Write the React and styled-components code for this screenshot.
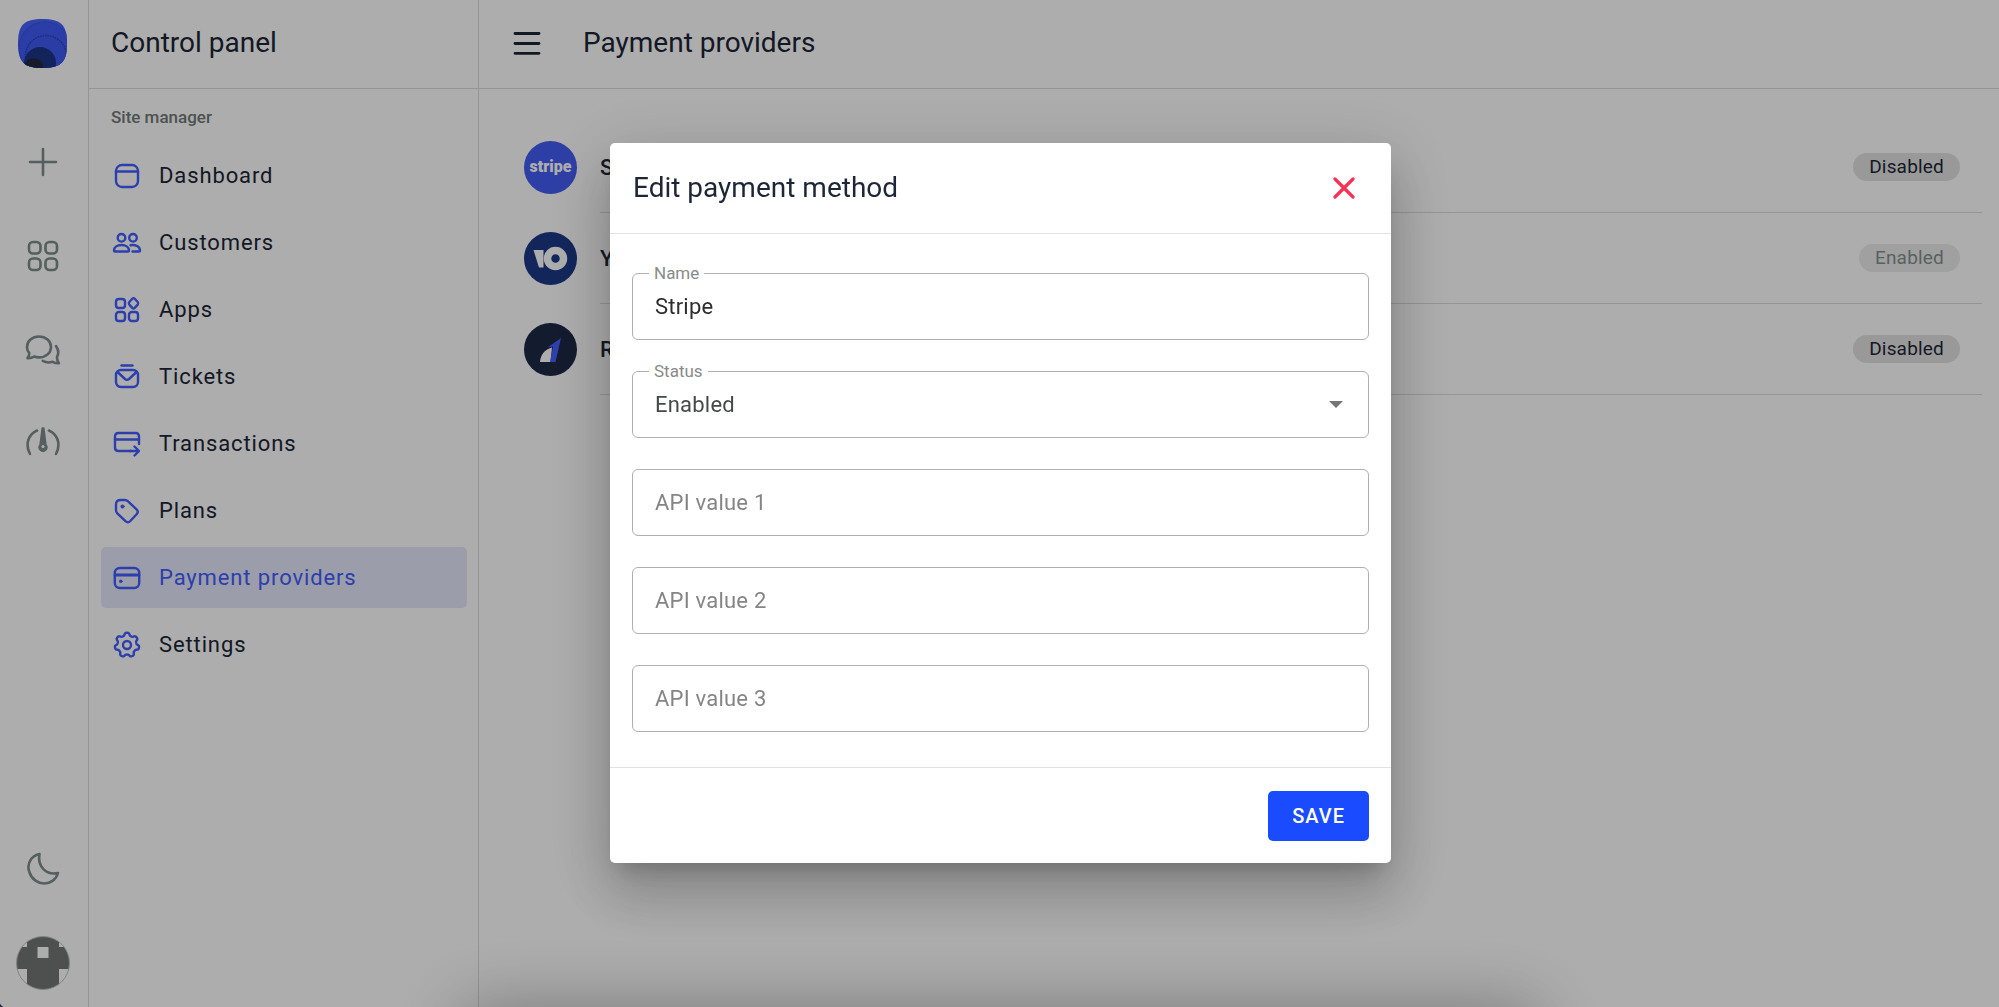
import React, { useState } from 'react';
import styled, { createGlobalStyle } from 'styled-components';

const ink = '#1d2636',
    muted = '#7e8c89',
    primary = '#415dff',
    line = '#dcdcdc',
    fieldLine = '#b0b0b0'

const navItems = [
    { label: 'Dashboard', icon: DashboardIcon },
    { label: 'Customers', icon: CustomersIcon },
    { label: 'Apps', icon: AppsIcon },
    { label: 'Tickets', icon: TicketsIcon },
    { label: 'Transactions', icon: TransactionsIcon },
    { label: 'Plans', icon: PlansIcon },
    { label: 'Payment providers', icon: CardIcon, active: true },
    { label: 'Settings', icon: SettingsIcon },
]

const providers = [
    { name: 'Stripe', logo: StripeLogo, status: 'Disabled' },
    { name: 'YooKassa', logo: YooLogo, status: 'Enabled' },
    { name: 'Robokassa', logo: RoboLogo, status: 'Disabled' },
]

export default function App(){
    const [name, setName] = useState('Stripe')
    const [status, setStatus] = useState('Enabled')

    return (
        <>
            <GlobalStyle/>
            <Page>
                <Rail>
                    <LogoLink href="#" aria-label="Home"><BrandLogo/></LogoLink>
                    <RailButtons>
                        <RailButton aria-label="Add"><PlusIcon/></RailButton>
                        <RailButton aria-label="Apps"><GridIcon/></RailButton>
                        <RailButton aria-label="Chats"><ChatIcon/></RailButton>
                        <RailButton aria-label="Usage"><GaugeIcon/></RailButton>
                    </RailButtons>
                    <RailButtons>
                        <RailButton aria-label="Dark mode"><MoonIcon/></RailButton>
                        <RailButton aria-label="Account"><Avatar/></RailButton>
                    </RailButtons>
                </Rail>

                <Sidebar>
                    <BarHeader><Title>Control panel</Title></BarHeader>
                    <GroupTitle>Site manager</GroupTitle>
                    <NavList>
                        {navItems.map(({ label, icon: Icon, active }) => (
                            <NavLink href="#" key={label} $active={active}>
                                <Icon/>
                                {label}
                            </NavLink>
                        ))}
                    </NavList>
                </Sidebar>

                <Main>
                    <BarHeader>
                        <MenuButton aria-label="Menu"><MenuIcon/></MenuButton>
                        <Title>Payment providers</Title>
                    </BarHeader>
                    <ProviderList>
                        {providers.map(({ name, logo: Logo, status }) => (
                            <Provider key={name}>
                                <Logo/>
                                <ProviderBody>
                                    <ProviderName>{name}</ProviderName>
                                    <Badge $muted={status === 'Enabled'}>{status}</Badge>
                                </ProviderBody>
                            </Provider>
                        ))}
                    </ProviderList>
                </Main>
            </Page>

            <Scrim>
                <BottomShade/>
                <WindowCorner/>
                <Dialog role="dialog" aria-labelledby="dialog-title" onSubmit={e => e.preventDefault()}>
                    <DialogHeader>
                        <Title id="dialog-title">Edit payment method</Title>
                        <CloseButton type="button" aria-label="Close"><CloseIcon/></CloseButton>
                    </DialogHeader>
                    <Fields>
                        <Field>
                            <FieldLabel htmlFor="name">Name</FieldLabel>
                            <Input id="name" value={name} onChange={e => setName(e.target.value)}/>
                        </Field>
                        <Field>
                            <FieldLabel htmlFor="status">Status</FieldLabel>
                            <Select id="status" value={status} onChange={e => setStatus(e.target.value)}>
                                <option>Enabled</option>
                                <option>Disabled</option>
                            </Select>
                            <ArrowIcon/>
                        </Field>
                        <Field><Input aria-label="API value 1" placeholder="API value 1"/></Field>
                        <Field><Input aria-label="API value 2" placeholder="API value 2"/></Field>
                        <Field><Input aria-label="API value 3" placeholder="API value 3"/></Field>
                    </Fields>
                    <DialogFooter>
                        <SaveButton type="submit">SAVE</SaveButton>
                    </DialogFooter>
                </Dialog>
            </Scrim>
        </>
    )
}

/* icons */

function BrandLogo(){
    return (
        <svg width="49" height="49" viewBox="0 0 49 49">
            <defs>
                <clipPath id="brand"><path d="M24.500 0C43 0 49 6 49 24.500S43 49 24.500 49 0 43 0 24.500 6 0 24.500 0Z"/></clipPath>
            </defs>
            <g clipPath="url(#brand)">
                <rect width="49" height="49" fill="#4763ff"/>
                <circle cx="27" cy="29" r="26" fill="#405bf5" stroke="#3049cc" strokeDasharray="1.500 1"/>
                <circle cx="28" cy="37" r="20.500" fill="#3f5af2" stroke="#2a41b0" strokeWidth="1.500" strokeDasharray="1.500 1"/>
                <circle cx="22" cy="44" r="16" fill="#1b3687"/>
                <ellipse cx="15.500" cy="48" rx="9.500" ry="9" fill="#20283d"/>
            </g>
        </svg>
    )
}

function PlusIcon(){
    return (
        <RailSvg viewBox="0 0 36 36">
            <path d="M18 5v26M5 18h26"/>
        </RailSvg>
    )
}

function GridIcon(){
    return (
        <RailSvg viewBox="0 0 36 36">
            <rect x="4" y="4" width="11.500" height="11.500" rx="4"/>
            <rect x="20.500" y="4" width="11.500" height="11.500" rx="4"/>
            <rect x="4" y="20.500" width="11.500" height="11.500" rx="4"/>
            <rect x="20.500" y="20.500" width="11.500" height="11.500" rx="4"/>
        </RailSvg>
    )
}

function ChatIcon(){
    return (
        <RailSvg viewBox="0 0 36 36">
            <path d="M14 4.500c6.800 0 12 4.600 12 10.400 0 5.900-5.200 10.500-12 10.500-1.800 0-3.400-.3-4.900-.9-1.700 1.200-3.900 1.800-6.600 1.600 1.300-1.500 1.900-3.100 1.800-5C2.700 19.400 2 17.300 2 14.900 2 9.100 7.200 4.500 14 4.500Z"/>
            <path d="M31 14c2.400 3.300 2.900 7.400 1 11-.1 2.500.4 4.400 1.900 6.300-2.600.1-4.600-.4-6.300-1.600-3.300 1.200-6.700.9-9.800-.8"/>
        </RailSvg>
    )
}

function GaugeIcon(){
    return (
        <RailSvg viewBox="0 0 36 36">
            <path d="M12 4.500C3.400 8.500-.2 18 5 28"/>
            <path d="M24 4.500c8.600 4 12.200 13.500 7 23.500"/>
            <path d="M17.200 2h1.600l2.200 17a3.800 3.800 0 1 1-6 0Z" fill="currentColor" strokeWidth="1.500"/>
            <circle cx="18" cy="20.500" r="1.500" fill="#fff" stroke="none"/>
        </RailSvg>
    )
}

function MoonIcon(){
    return (
        <RailSvg viewBox="0 0 36 36">
            <path d="M14.500 3C5.500 5 1.500 13.500 4.500 21.500c5 14.500 24.500 14.500 28.500.5C22 24.500 12 16 14.500 3Z"/>
        </RailSvg>
    )
}

function Avatar(){
    return (
        <svg width="54" height="54" viewBox="0 0 54 54">
            <defs><clipPath id="avatar"><circle cx="27" cy="27" r="26.500"/></clipPath></defs>
            <g clipPath="url(#avatar)">
                <rect width="54" height="54" fill="#fff"/>
                <path d="M11 0h32v11h11v22H43v21H11V33H0V11h11Z" fill="#727775"/>
                <rect x="21.500" y="11" width="11" height="11" fill="#fff"/>
            </g>
            <circle cx="27" cy="27" r="26.500" fill="none" stroke="#bfc4c3"/>
        </svg>
    )
}

function MenuIcon(){
    return (
        <svg width="28" height="24" viewBox="0 0 28 24" stroke={ink} strokeWidth="2.800" strokeLinecap="round">
            <path d="M2 2.500h24M2 12.500h24M2 22.300h24"/>
        </svg>
    )
}

function CloseIcon(){
    return (
        <svg width="22" height="22" viewBox="0 0 22 22" stroke="#ff2f55" strokeWidth="3.200" strokeLinecap="round">
            <path d="M2 2l18 18M20 2L2 20"/>
        </svg>
    )
}

function ArrowIcon(){
    return (
        <Arrow width="14" height="7" viewBox="0 0 14 7">
            <path d="M0 0h14L7 7Z" fill="#757575"/>
        </Arrow>
    )
}

function DashboardIcon(){
    return (
        <NavSvg viewBox="0 0 30 30">
            <rect x="4" y="4" width="22" height="22" rx="6"/>
            <path d="M4 10.500h22"/>
        </NavSvg>
    )
}

function CustomersIcon(){
    return (
        <NavSvg viewBox="0 0 30 30">
            <circle cx="9.500" cy="9.800" r="3.800"/>
            <circle cx="21" cy="9.800" r="3.800"/>
            <path d="M2 22.500c0-3.500 3.500-5.500 7.500-5.500s7.500 2 7.500 5.500c0 .7-.4 1-1 1H3c-.6 0-1-.3-1-1Z"/>
            <path d="M18.500 17.200c5-.8 9.500 1.300 9.500 5.300 0 .7-.4 1-1 1h-6.500"/>
        </NavSvg>
    )
}

function AppsIcon(){
    return (
        <NavSvg viewBox="0 0 30 30">
            <rect x="4" y="4" width="9" height="9" rx="2.800"/>
            <rect x="4" y="17" width="9" height="9" rx="2.800"/>
            <rect x="17" y="17" width="9" height="9" rx="2.800"/>
            <path d="M20.300 3.700q1.200-1.100 2.400 0l3 3.300q1.100 1.300 0 2.600l-3 3.300q-1.200 1.100-2.400 0l-3-3.300q-1.100-1.300 0-2.600Z"/>
        </NavSvg>
    )
}

function TicketsIcon(){
    return (
        <NavSvg viewBox="0 0 30 30">
            <path d="M9.500 3.500h11"/>
            <rect x="4" y="8" width="22" height="17" rx="5"/>
            <path d="M5.500 10l7.500 7q2 1.600 4 0l7.500-7"/>
        </NavSvg>
    )
}

function TransactionsIcon(){
    return (
        <NavSvg viewBox="0 0 30 30">
            <path d="M19 22H6.500Q3 22 3 18.500v-11Q3 4 6.500 4h17Q27 4 27 7.500V15"/>
            <path d="M3 10.500h24M18 22h8.500M22.500 17.500l4.500 4.500-4.500 4.500"/>
        </NavSvg>
    )
}

function PlansIcon(){
    return (
        <NavSvg viewBox="0 0 30 30">
            <path d="M4 8.500Q4 4 8.500 4h4.300q1.700 0 3 1.200l8.700 8.100q2.500 2.300.1 4.900l-6.300 6.800q-2.300 2.500-4.800.2l-8.200-7.900Q4 16 4 14.200Z"/>
            <circle cx="10.500" cy="10.500" r="1.600" fill="currentColor" strokeWidth="1"/>
        </NavSvg>
    )
}

function CardIcon(){
    return (
        <NavSvg viewBox="0 0 30 30">
            <rect x="2.800" y="5" width="24.400" height="20" rx="5"/>
            <path d="M3 12h24" strokeWidth="3"/>
            <circle cx="8.800" cy="18.300" r="1.500" fill="currentColor" strokeWidth=".5"/>
        </NavSvg>
    )
}

// seven soft teeth round the hub
const gearPoints = Array.from({ length: 126 }, (_, i) => {
    const angle = i / 126 * Math.PI * 2
    const radius = 10.9 + 1.4 * Math.tanh(1.8 * Math.cos(angle * 7))
    return `${(15 + radius * Math.sin(angle)).toFixed(2)},${(15 - radius * Math.cos(angle)).toFixed(2)}`
}).join(' ')

function SettingsIcon(){
    return (
        <NavSvg viewBox="0 0 30 30">
            <circle cx="15" cy="15" r="4"/>
            <polygon points={gearPoints}/>
        </NavSvg>
    )
}

function StripeLogo(){
    return <StripeMark aria-hidden="true">stripe</StripeMark>
}

function YooLogo(){
    return (
        <LogoSvg viewBox="0 0 53 53">
            <circle cx="26.500" cy="26.500" r="26.500" fill="#1b3987"/>
            <path d="M9.500 18h10v17.500H15Z" fill="#fff"/>
            <circle cx="31.500" cy="26.500" r="8" fill="none" stroke="#fff" strokeWidth="7.500"/>
        </LogoSvg>
    )
}

function RoboLogo(){
    return (
        <LogoSvg viewBox="0 0 53 53">
            <circle cx="26.500" cy="26.500" r="26.500" fill="#1d2844"/>
            <path d="M16 39c.5-7 4-12 12-14.500L26.500 39Z" fill="#fff"/>
            <path d="M23.500 24.500L37 15l-5.500 24h-5.500l3-15.500Z" fill="#4560ff"/>
        </LogoSvg>
    )
}

const GlobalStyle = createGlobalStyle`
    * {
        box-sizing: border-box;
    }

    body{
        margin: 0;
        font-family: Roboto, sans-serif;
        color: ${ink};
        background-color: white;
    }

    button, input, select{
        font-family: inherit;
    }

    button{
        padding: 0;
        border: none;
        background: none;
        cursor: pointer;
    }
`

const Page = styled.div`
    display: flex;
    min-height: 100vh;
`

const Rail = styled.div`
    display: flex;
    flex-direction: column;
    align-items: center;
    width: 89px;
    padding: 19px 3px 17px 0;
    border-right: 1px solid ${line};
`

const LogoLink = styled.a`
    display: block;
    height: 49px;
    margin-bottom: 67px;
`

const RailButtons = styled.div`
    display: flex;
    flex-direction: column;
    gap: 40px;

    &:last-child{
        margin-top: auto;
    }
`

const RailButton = styled.button`
    display: flex;
    align-items: center;
    justify-content: center;
    width: 54px;
    height: 54px;
    color: ${muted};
`

const RailSvg = styled.svg`
    width: 36px;
    height: 36px;
    fill: none;
    stroke: currentColor;
    stroke-width: 2.6;
    stroke-linecap: round;
    stroke-linejoin: round;
`

const Sidebar = styled.aside`
    width: 390px;
    border-right: 1px solid ${line};
`

const BarHeader = styled.header`
    display: flex;
    align-items: center;
    height: 89px;
    padding: 0 22px 2px;
    border-bottom: 1px solid ${line};
`

const Title = styled.h1`
    margin: 0;
    font-size: 28px;
    font-weight: 400;
    line-height: 40px;
`

const GroupTitle = styled.h2`
    margin: 16px 22px 16px;
    font-size: 17px;
    font-weight: 500;
    line-height: 24px;
    color: #717a78;
`

const NavList = styled.nav`
    display: flex;
    flex-direction: column;
    gap: 6px;
    padding: 0 11px 0 12px;
`

const NavLink = styled.a`
    display: flex;
    align-items: center;
    gap: 17px;
    height: 61px;
    padding: 0 11px;
    border-radius: 5px;
    font-size: 22px;
    letter-spacing: 0.04em;
    text-decoration: none;
    color: ${({ $active }) => $active ? primary : ink};
    background-color: ${({ $active }) => $active ? '#e5e7fb' : 'transparent'};
`

const NavSvg = styled.svg`
    width: 30px;
    height: 30px;
    fill: none;
    color: ${primary};
    stroke: currentColor;
    stroke-width: 2.4;
    stroke-linecap: round;
    stroke-linejoin: round;
`

const Main = styled.main`
    flex: 1;
`

const MenuButton = styled.button`
    display: flex;
    margin: 0 42px 0 12px;
`

const ProviderList = styled.ul`
    margin: 0;
    padding: 33px 17px 0 45px;
    list-style: none;
`

const Provider = styled.li`
    display: flex;
    align-items: center;
    gap: 23px;
    height: 91px;
`

const LogoSvg = styled.svg`
    width: 53px;
    height: 53px;
`

const StripeMark = styled.div`
    display: flex;
    align-items: center;
    justify-content: center;
    width: 53px;
    height: 53px;
    padding-bottom: 2px;
    border-radius: 50%;
    font-size: 16px;
    font-weight: 900;
    color: white;
    background-color: #435df5;
`

const ProviderBody = styled.div`
    display: flex;
    align-items: center;
    justify-content: space-between;
    flex: 1;
    height: 100%;
    padding-right: 22px;
    border-bottom: 1px solid ${line};
`

const ProviderName = styled.span`
    font-size: 22px;
    font-weight: 500;
`

const Badge = styled.span`
    height: 28px;
    padding: 0 16px;
    border-radius: 14px;
    font-size: 19px;
    line-height: 28px;
    letter-spacing: 0.01em;
    color: ${({ $muted }) => $muted ? '#84908e' : ink};
    background-color: ${({ $muted }) => $muted ? '#ececec' : '#e2e2e2'};
`

const Scrim = styled.div`
    position: fixed;
    inset: 0;
    display: flex;
    align-items: center;
    justify-content: center;
    padding: 0 0 2px 2px;
    overflow: hidden;
    background-color: rgba(0, 0, 0, 0.32);
`

const BottomShade = styled.div`
    position: absolute;
    bottom: -60px;
    left: 24%;
    right: 24%;
    height: 40px;
    box-shadow: 0 0 70px 20px rgba(0, 0, 0, 0.3);
`

const WindowCorner = styled.div`
    position: absolute;
    bottom: 0;
    left: 0;
    width: 6px;
    height: 6px;
    background: radial-gradient(circle at 100% 0, transparent 6px, ${ink} 7px);
`

const Dialog = styled.form`
    position: relative;
    width: 781px;
    max-width: 100%;
    border-radius: 5px;
    background-color: white;
    box-shadow: 0 15px 21px -10px rgba(0, 0, 0, 0.2), 0 34px 53px 4px rgba(0, 0, 0, 0.14), 0 13px 64px 11px rgba(0, 0, 0, 0.12);
`

const DialogHeader = styled.div`
    display: flex;
    align-items: center;
    justify-content: space-between;
    height: 91px;
    padding: 0 36px 0 23px;
    border-bottom: 1px solid #e2e2e2;
`

const CloseButton = styled.button`
    display: flex;
`

const Fields = styled.div`
    display: flex;
    flex-direction: column;
    gap: 31px;
    padding: 39px 22px 35px;
`

const Field = styled.div`
    position: relative;
    display: flex;
`

const FieldLabel = styled.label`
    position: absolute;
    top: -12px;
    left: 17px;
    padding: 0 5px;
    font-size: 17px;
    line-height: 24px;
    color: #8a8a8a;
    background-color: white;
`

const Input = styled.input`
    width: 100%;
    height: 67px;
    padding: 0 22px;
    border: 1px solid ${fieldLine};
    border-radius: 6px;
    font-size: 22px;
    letter-spacing: 0.01em;
    color: #2b2d2e;
    background-color: white;

    &::placeholder{
        color: #858585;
        opacity: 1;
    }
`

const Select = styled(Input).attrs({ as: 'select' })`
    appearance: none;
    color: #454a49;
`

const Arrow = styled.svg`
    position: absolute;
    top: 30px;
    right: 26px;
    pointer-events: none;
`

const DialogFooter = styled.div`
    display: flex;
    justify-content: flex-end;
    padding: 23px 22px 22px;
    border-top: 1px solid #e2e2e2;
`

const SaveButton = styled.button`
    height: 50px;
    padding: 0 24px;
    border-radius: 5px;
    font-size: 20px;
    font-weight: 500;
    letter-spacing: 1px;
    color: white;
    background-color: #1a4bff;
`
